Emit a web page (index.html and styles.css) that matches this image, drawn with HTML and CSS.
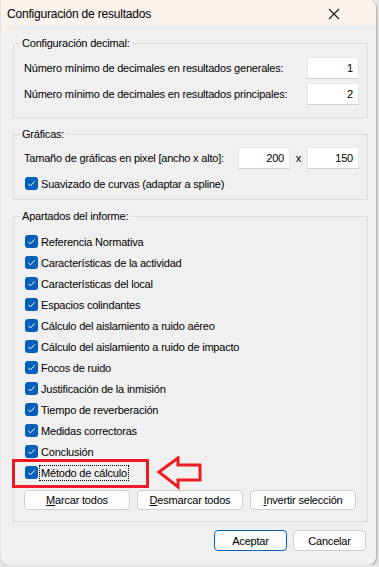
FILE: index.html
```html
<!DOCTYPE html>
<html lang="es">
<head>
  <meta charset="UTF-8">
  <meta name="viewport" content="width=device-width, initial-scale=1.0">
  <title>Configuración de resultados</title>
  <link rel="stylesheet" href="styles.css">
</head>
<body>
  <div class="dlg">
    <div class="dlg__title">
      <span class="dlg__title__text">Configuración de resultados</span>
      <svg class="dlg__close" width="12" height="12" viewBox="0 0 12 12"><path d="M1 1 L11 11 M11 1 L1 11" stroke="#1a1a1a" stroke-width="1.1" fill="none"/></svg>
    </div>

    <div class="dlg__body">
      <fieldset class="grp">
        <legend class="grp__legend">Configuración decimal:</legend>
        <div class="grp__content">
          <div class="row">
            <span class="row__label">Número mínimo de decimales en resultados generales:</span>
            <span class="edit">1</span>
          </div>
          <div class="row">
            <span class="row__label">Número mínimo de decimales en resultados principales:</span>
            <span class="edit">2</span>
          </div>
        </div>
      </fieldset>

      <fieldset class="grp">
        <legend class="grp__legend">Gráficas:</legend>
        <div class="grp__content grp__content--g">
          <div class="row">
            <span class="row__label">Tamaño de gráficas en pixel [ancho x alto]:</span>
            <span class="edit">200</span>
            <span class="row__x">x</span>
            <span class="edit">150</span>
          </div>
          <div class="chk">
            <span class="chk__box"></span><span class="chk__text">Suavizado de curvas (adaptar a spline)</span>
          </div>
        </div>
      </fieldset>

      <fieldset class="grp">
        <legend class="grp__legend">Apartados del informe:</legend>
        <div class="grp__content grp__content--list">
          <div class="chk"><span class="chk__box"></span><span class="chk__text">Referencia Normativa</span></div>
          <div class="chk"><span class="chk__box"></span><span class="chk__text">Características de la actividad</span></div>
          <div class="chk"><span class="chk__box"></span><span class="chk__text">Características del local</span></div>
          <div class="chk"><span class="chk__box"></span><span class="chk__text">Espacios colindantes</span></div>
          <div class="chk"><span class="chk__box"></span><span class="chk__text">Cálculo del aislamiento a ruido aéreo</span></div>
          <div class="chk"><span class="chk__box"></span><span class="chk__text">Cálculo del aislamiento a ruido de impacto</span></div>
          <div class="chk"><span class="chk__box"></span><span class="chk__text">Focos de ruido</span></div>
          <div class="chk"><span class="chk__box"></span><span class="chk__text">Justificación de la inmisión</span></div>
          <div class="chk"><span class="chk__box"></span><span class="chk__text">Tiempo de reverberación</span></div>
          <div class="chk"><span class="chk__box"></span><span class="chk__text">Medidas correctoras</span></div>
          <div class="chk"><span class="chk__box"></span><span class="chk__text">Conclusión</span></div>
          <div class="chk"><span class="chk__box"></span><span class="chk__text chk__text--focus">Método de cálculo</span></div>

          <div class="btn-row">
            <span class="btn btn--wide"><u>M</u>arcar todos</span>
            <span class="btn btn--wide"><u>D</u>esmarcar todos</span>
            <span class="btn btn--wide"><u>I</u>nvertir selección</span>
          </div>
        </div>
      </fieldset>

      <div class="dlg__foot">
        <span class="btn btn--default">Aceptar</span>
        <span class="btn">Cancelar</span>
      </div>
    </div>

    <!-- marca roja sobre el dialogo -->
    <div class="mark"></div>
    <svg class="arrow" width="50" height="36" viewBox="0 0 50 36">
      <polygon points="3,16 22,2 22,9 44,9 44,24 22,24 22,31" fill="none" stroke="#ed1c24" stroke-width="3" stroke-linejoin="miter"/>
    </svg>
  </div>
</body>
</html>
```

FILE: styles.css
```css
/* dialogo */
html, body {
  margin: 0;
  padding: 0;
}
body {
  background: #e4e4e4;
  font-family: "Liberation Sans", Arial, sans-serif;
  font-size: 11px;
  letter-spacing: -0.2px;
  color: #000;
}
.dlg {
  position: relative;
  width: 375px;
  height: 565px;
  margin-left: 1px;
  background: #f0f0f0;
  border-radius: 0 8px 8px 8px;
  overflow: hidden;
  box-shadow: 1px 1px 2px rgba(0, 0, 0, 0.25);
}
.dlg__title {
  height: 26px;
  display: flex;
  align-items: center;
  justify-content: space-between;
  padding: 0 0 0 6px;
  background: #f9f2ed;
}
.dlg__title__text {
  font-size: 12px;
  padding-top: 2px;
}
.dlg__close {
  margin-right: 36px;
  margin-top: 1px;
}
.dlg__body {
  padding: 9px 8px 0 12px;
}

/* grupos */
.grp {
  margin: 0 0 8px 0;
  padding: 0;
  border: 1px solid #dcdcdc;
  min-width: 0;
}
.grp__legend {
  margin-left: 6px;
  padding: 0 2px;
  line-height: 16px;
}
.grp__content {
  padding: 6px 8px 12px 10px;
  display: flex;
  flex-direction: column;
  gap: 4px;
}
.grp__content--g {
  padding-top: 5px;
  padding-bottom: 5px;
}
.grp__content--list {
  padding: 7px 8px 11px 10px;
  gap: 0;
}

.row {
  display: flex;
  align-items: center;
  height: 22px;
}
.row__label {
  flex: 1;
}
.row__x {
  width: 17px;
  text-align: center;
}
.edit {
  width: 52px;
  height: 22px;
  box-sizing: border-box;
  background: #fff;
  border: 1px solid #e6e6e6;
  border-bottom-color: #cfcfcf;
  text-align: right;
  padding: 4px 5px 0 0;
}

/* casillas */
.chk {
  display: flex;
  align-items: center;
  height: 21px;
  padding-left: 1px;
}
.chk__box {
  width: 13px;
  height: 13px;
  border-radius: 3px;
  background: #005fb8;
  margin-right: 3px;
  flex: none;
  background-image: url("data:image/svg+xml;utf8,<svg xmlns='http://www.w3.org/2000/svg' width='13' height='13' viewBox='0 0 13 13'><path d='M3.3 6.8 L5.4 8.9 L9.7 4.4' fill='none' stroke='white' stroke-width='1'/></svg>");
}
.chk__text--focus {
  outline: 1px dotted #000;
  outline-offset: 1px;
}

/* botones */
.btn-row {
  display: flex;
  gap: 7px;
  margin-top: 7px;
}
.btn {
  display: flex;
  align-items: center;
  justify-content: center;
  box-sizing: border-box;
  width: 73px;
  height: 21px;
  background: #fdfdfd;
  border: 1px solid #d0d0d0;
  border-radius: 4px;
}
.btn--wide {
  width: 106px;
  height: 20px;
}
.btn--default {
  border-color: #005fb8;
}
.dlg__foot {
  display: flex;
  justify-content: flex-end;
  gap: 6px;
  margin-top: 3px;
  padding-right: 2px;
}

/* marca */
.mark {
  position: absolute;
  left: 11px;
  top: 459px;
  width: 137px;
  height: 29px;
  box-sizing: border-box;
  border: 3px solid #ed1c24;
}
.arrow {
  position: absolute;
  left: 155px;
  top: 456px;
}
```
